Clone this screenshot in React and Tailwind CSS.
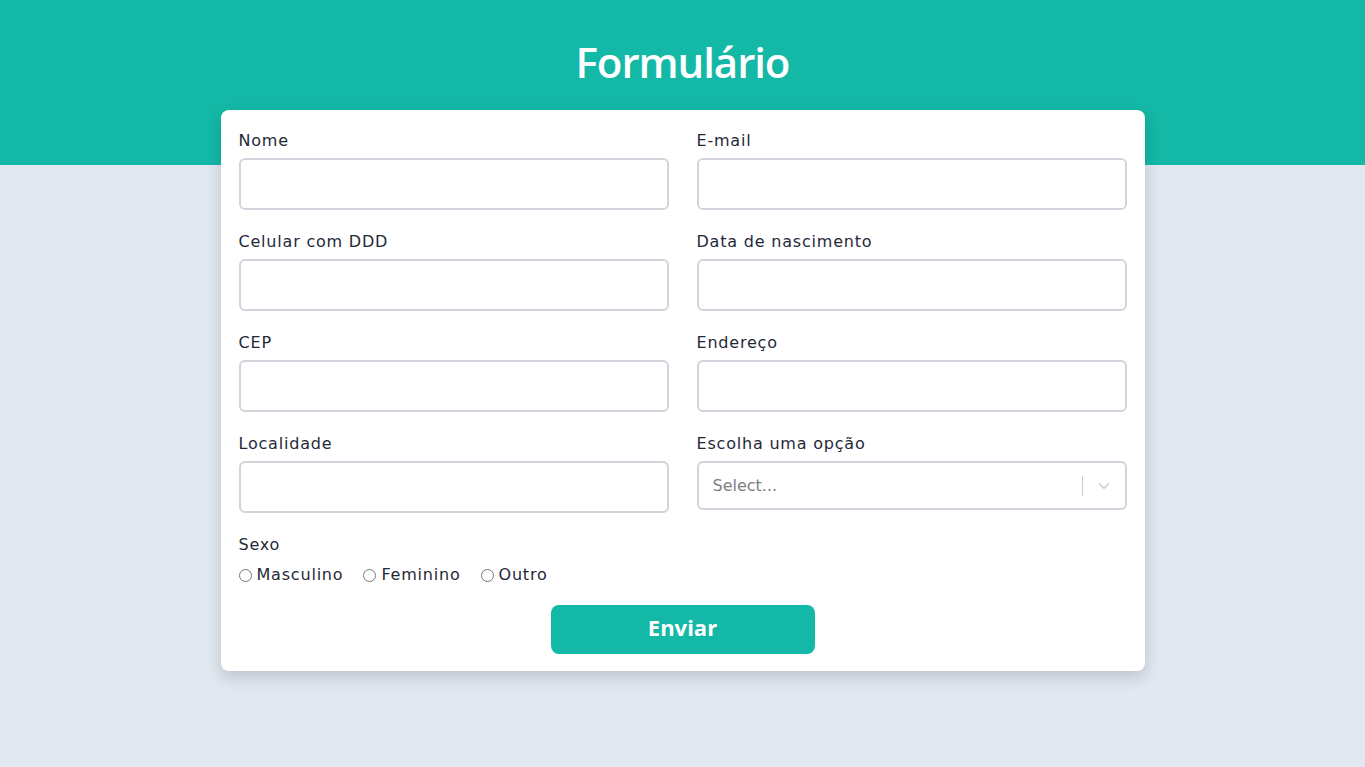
import React from 'react';
import { ChevronDown } from 'lucide-react';

const Field = ({ label }) => (
  <div className="flex flex-col">
    <label className="text-base leading-6 tracking-[0.05em] text-[#1f2937]">{label}</label>
    <input className="mt-[5px] h-[52px] w-full rounded-md border-2 border-[#d1d5db] bg-white px-3 outline-none" />
  </div>
);

export default function App() {
  return (
    <div className="min-h-[767px] bg-[#e2e8f0]" style={{ fontFamily: '"DejaVu Sans", sans-serif' }}>
      {/* Header */}
      <div className="h-[165px] bg-[#14b8a6] pt-[34px] text-center">
        <h1 className="font-['Open_Sans',sans-serif] text-[42px] font-semibold leading-[56px] tracking-tight text-white">
          Formulário
        </h1>
      </div>

      {/* Card */}
      <div className="relative mx-auto -mt-[55px] w-[924px] rounded-lg bg-white px-[18px] pb-[17px] pt-[19px] shadow-[0_6px_16px_rgba(15,23,42,0.18)]">
        <div className="grid grid-cols-2 gap-x-7 gap-y-5">
          <Field label="Nome" />
          <Field label="E-mail" />
          <Field label="Celular com DDD" />
          <Field label="Data de nascimento" />
          <Field label="CEP" />
          <Field label="Endereço" />
          <Field label="Localidade" />
          <div className="flex flex-col">
            <label className="text-base leading-6 tracking-[0.05em] text-[#1f2937]">Escolha uma opção</label>
            <div className="mt-[5px] flex h-[49px] items-center rounded-md border-2 border-[#d1d5db] bg-white pl-[14px]">
              <span className="flex-1 text-base text-[#808080]">Select...</span>
              <span className="h-[20px] w-px bg-[#cccccc]" />
              <span className="flex w-[42px] items-center justify-center text-[#cccccc]">
                <ChevronDown size={18} strokeWidth={2} />
              </span>
            </div>
          </div>
        </div>

        <div className="mt-5">
          <div className="text-base leading-6 tracking-[0.05em] text-[#1f2937]">Sexo</div>
          <div className="mt-1.5 flex items-center gap-5 text-base leading-6 tracking-[0.05em] text-[#1f2937]">
            {['Masculino', 'Feminino', 'Outro'].map((o) => (
              <label key={o} className="flex items-center gap-[5px]">
                <input type="radio" name="sexo" className="m-0 h-[13px] w-[13px]" />
                {o}
              </label>
            ))}
          </div>
        </div>

        <div className="mt-[18px] flex justify-center">
          <button className="h-[49px] w-[264px] rounded-lg bg-[#14b8a6] pb-1 font-['Open_Sans',sans-serif] text-[22px] font-bold text-white">
            Enviar
          </button>
        </div>
      </div>
    </div>
  );
}
